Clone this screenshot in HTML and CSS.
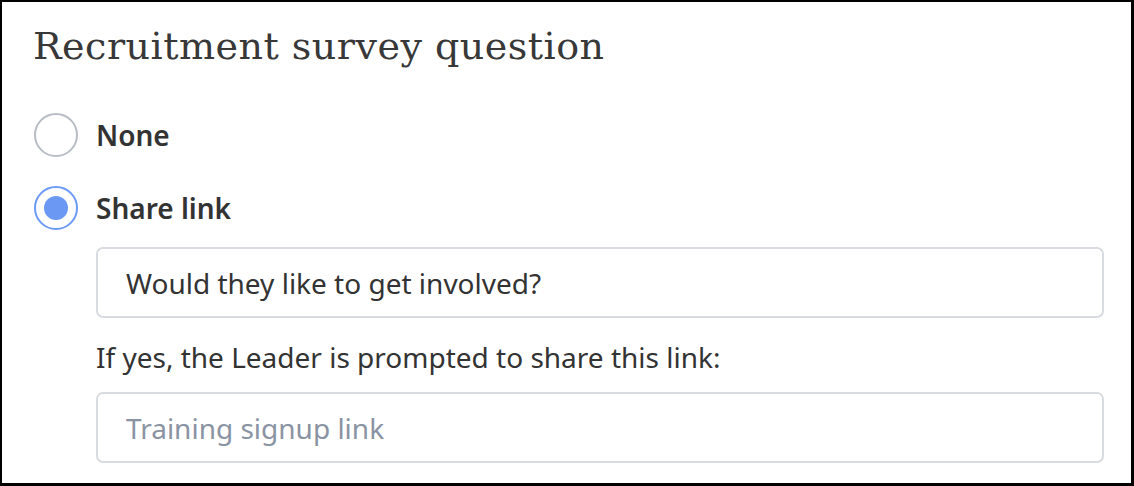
FILE: index.html
```html
<!DOCTYPE html>
<html lang="en">
<head>
<meta charset="utf-8">
<title>Recruitment survey question</title>
<link rel="stylesheet" href="styles.css">
</head>
<body>
<div class="frame">
  <h1 class="title">Recruitment survey question</h1>
  <div class="options">
    <label class="option">
      <span class="radio"></span>
      <span class="option-label">None</span>
    </label>
    <label class="option">
      <span class="radio checked"><span class="dot"></span></span>
      <span class="option-label">Share link</span>
    </label>
  </div>
  <div class="details">
    <div class="field">Would they like to get involved?</div>
    <div class="hint">If yes, the Leader is prompted to share this link:</div>
    <div class="field placeholder">Training signup link</div>
  </div>
</div>
</body>
</html>
```
FILE: styles.css
```css
html, body {
  margin: 0;
  padding: 0;
  background: #fff;
}
.frame {
  box-sizing: border-box;
  width: 1134px;
  height: 486px;
  border: 2px solid #000;
  border-right-width: 3px;
  border-bottom-width: 3px;
  padding: 20px 27px 0 31px;
  display: flex;
  flex-direction: column;
  font-family: "Noto Sans", "DejaVu Sans", sans-serif;
  color: #333;
}
.title {
  margin: 0;
  font-family: "DejaVu Serif", serif;
  font-weight: 400;
  font-size: 38px;
  letter-spacing: 0.5px;
  line-height: 48px;
  color: #383838;
}
.options {
  margin-top: 43px;
  display: flex;
  flex-direction: column;
  gap: 29px;
}
.option {
  display: flex;
  align-items: center;
  gap: 18px;
  height: 44px;
}
.radio {
  box-sizing: border-box;
  width: 44px;
  height: 44px;
  margin-left: 1px;
  border: 2px solid #b8bcc4;
  border-radius: 50%;
  display: flex;
  align-items: center;
  justify-content: center;
}
.radio.checked {
  border-color: #6b9af5;
}
.dot {
  width: 24px;
  height: 24px;
  border-radius: 50%;
  background: #6a98f3;
}
.option-label {
  font-size: 28px;
  font-weight: 600;
  color: #333;
}
.details {
  margin-left: 63px;
  margin-top: 17px;
  display: flex;
  flex-direction: column;
}
.field {
  box-sizing: border-box;
  height: 71px;
  border: 2px solid #d8dbe0;
  border-radius: 7px;
  padding: 0 28px;
  display: flex;
  align-items: center;
  font-size: 28px;
  color: #333;
}
.field.placeholder {
  color: #8a93a3;
}
.hint {
  font-size: 28px;
  line-height: 38px;
  margin: 20px 0 16px;
  color: #333;
}
```
